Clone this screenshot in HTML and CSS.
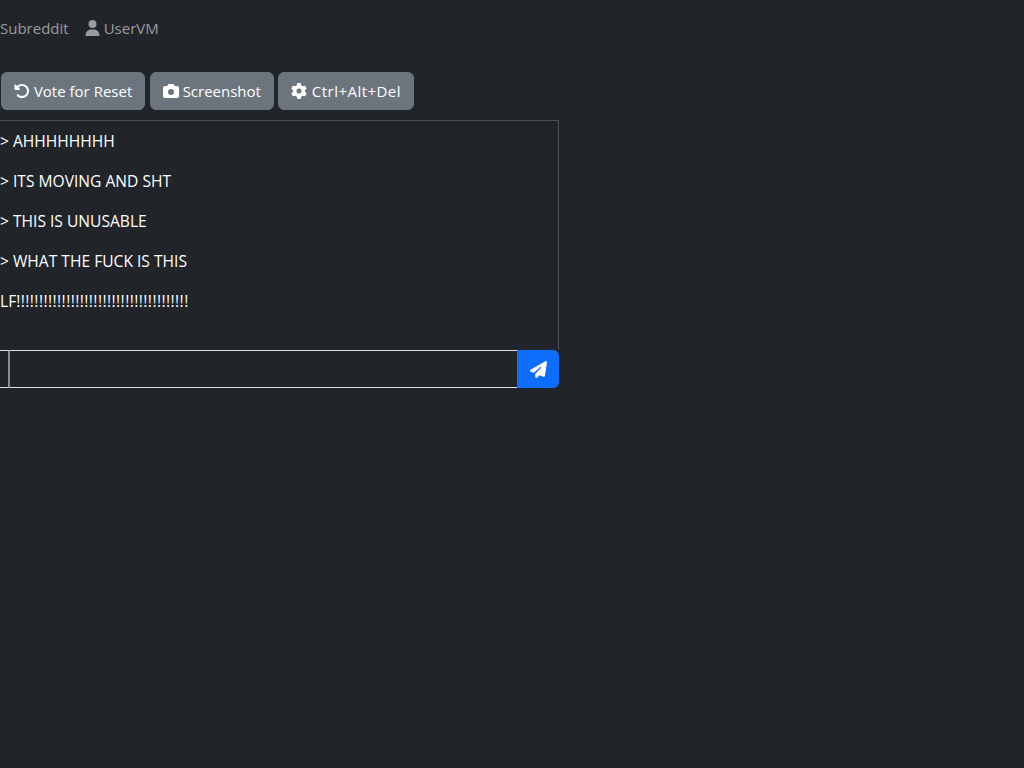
FILE: index.html
```html
<!DOCTYPE html>
<html lang="en">
<head>
<meta charset="utf-8">
<title>UserVM</title>
<link rel="stylesheet" href="styles.css">
</head>
<body>
<nav class="topnav">
  <a class="navlink" href="#">Subreddit</a>
  <a class="navlink" href="#"><svg class="icon user" viewBox="0 0 448 512"><path d="M224 256A128 128 0 1 0 224 0a128 128 0 1 0 0 256zm-45.7 48C79.8 304 0 383.8 0 482.3C0 498.7 13.3 512 29.7 512H418.3c16.4 0 29.7-13.3 29.7-29.7C448 383.8 368.2 304 269.7 304H178.3z"/></svg>UserVM</a>
</nav>
<div class="actions">
  <button class="btn"><svg class="icon" viewBox="0 0 512 512"><path d="M48.5 224H40c-13.3 0-24-10.7-24-24V72c0-9.7 5.8-18.5 14.8-22.2s19.3-1.7 26.2 5.2L98.6 96.6c87.6-86.5 228.7-86.2 315.8 1c87.5 87.5 87.5 229.3 0 316.8s-229.3 87.5-316.8 0c-12.5-12.5-12.5-32.8 0-45.3s32.8-12.5 45.3 0c62.5 62.5 163.8 62.5 226.3 0s62.5-163.8 0-226.3c-62.2-62.2-162.7-62.5-225.3-1L185 183c6.9 6.9 8.9 17.2 5.2 26.2s-12.5 14.8-22.2 14.8H48.5z"/></svg> Vote for Reset</button>
  <button class="btn"><svg class="icon" viewBox="0 0 512 512"><path d="M149.1 64.8L138.7 96H64C28.7 96 0 124.7 0 160V416c0 35.3 28.7 64 64 64H448c35.3 0 64-28.7 64-64V160c0-35.3-28.7-64-64-64H373.3L362.9 64.8C356.4 45.2 338.1 32 317.4 32H194.6c-20.7 0-39 13.2-45.5 32.8zM256 192a96 96 0 1 1 0 192 96 96 0 1 1 0-192z"/></svg> Screenshot</button>
  <button class="btn btn-keys"><svg class="icon" viewBox="0 0 512 512"><path d="M495.9 166.6c3.2 8.7 .5 18.4-6.4 24.6l-43.3 39.4c1.1 8.3 1.7 16.8 1.7 25.4s-.6 17.1-1.7 25.4l43.3 39.4c6.9 6.2 9.6 15.9 6.4 24.6c-4.4 11.9-9.7 23.3-15.8 34.3l-4.7 8.1c-6.6 11-14 21.4-22.1 31.2c-5.9 7.2-15.7 9.6-24.5 6.8l-55.7-17.7c-13.4 10.3-28.2 18.9-44 25.4l-12.5 57.1c-2 9.1-9 16.3-18.2 17.8c-13.8 2.3-28 3.5-42.5 3.5s-28.7-1.2-42.5-3.5c-9.2-1.5-16.2-8.7-18.2-17.8l-12.5-57.1c-15.8-6.5-30.6-15.1-44-25.4L83.1 425.9c-8.8 2.8-18.6 .3-24.5-6.8c-8.1-9.8-15.5-20.2-22.1-31.2l-4.7-8.1c-6.1-11-11.4-22.4-15.8-34.3c-3.2-8.7-.5-18.4 6.4-24.6l43.3-39.4C64.6 273.1 64 264.6 64 256s.6-17.1 1.7-25.4L22.4 191.2c-6.9-6.2-9.6-15.9-6.4-24.6c4.4-11.9 9.7-23.3 15.8-34.3l4.7-8.1c6.6-11 14-21.4 22.1-31.2c5.9-7.2 15.7-9.6 24.5-6.8l55.7 17.7c13.4-10.3 28.2-18.9 44-25.4l12.5-57.1c2-9.1 9-16.3 18.2-17.8C227.3 1.2 241.5 0 256 0s28.7 1.2 42.5 3.5c9.2 1.5 16.2 8.7 18.2 17.8l12.5 57.1c15.8 6.5 30.6 15.1 44 25.4l55.7-17.7c8.8-2.8 18.6-.3 24.5 6.8c8.1 9.8 15.5 20.2 22.1 31.2l4.7 8.1c6.1 11 11.4 22.4 15.8 34.3zM256 336a80 80 0 1 0 0-160 80 80 0 1 0 0 160z"/></svg> Ctrl+Alt+Del</button>
</div>
<div class="chat">
  <p class="line">&gt; AHHHHHHHH</p>
  <p class="line">&gt; ITS MOVING AND SHT</p>
  <p class="line">&gt; THIS IS UNUSABLE</p>
  <p class="line">&gt; WHAT THE FUCK IS THIS</p>
  <p class="line">LF<span class="bangs">!!!!!!!!!!!!!!!!!!!!!!!!!!!!!!!!!!!!!!</span></p>
</div>
<form class="composer">
  <span class="prefix"></span>
  <input class="field" type="text" aria-label="Message">
  <button class="send" type="button" aria-label="Send"><svg class="icon plane" viewBox="0 0 512 512"><path d="M498.1 5.6c10.1 7 15.4 19.1 13.5 31.2l-64 416c-1.5 9.7-7.4 18.2-16 23s-18.9 5.4-28 1.6L284 427.7l-68.5 74.1c-8.9 9.7-22.9 12.9-35.2 8.1S160 493.2 160 480V396.4c0-4 1.5-7.8 4.2-10.7L331.8 202.8c5.8-6.3 5.6-16-.4-22s-15.7-6.4-22-.7L106 360.8 17.7 316.6C7.1 311.3 .3 300.7 0 288.9s5.9-22.8 16.1-28.7l448-256c10.7-6.1 23.9-5.5 34 1.4z"/></svg></button>
</form>
</body>
</html>
```
FILE: styles.css
```css
* { box-sizing: border-box; }
html, body { height: 100%; }
body {
  margin: 0;
  background: #212529;
  color: #fff;
  font-family: "Open Sans", "Liberation Sans", sans-serif;
  font-size: 15px;
  line-height: 24px;
  overflow: hidden;
}
.topnav {
  display: flex;
  gap: 16px;
  height: 72px;
  padding-top: 16px;
}
.navlink {
  display: flex;
  align-items: center;
  height: 24px;
  color: rgba(255, 255, 255, 0.55);
  text-decoration: none;
  white-space: nowrap;
}
.icon {
  display: inline-block;
  width: 16px;
  height: 16px;
  fill: currentColor;
  vertical-align: -2px;
}
.icon.user { width: 15px; margin-right: 4px; }
.actions {
  display: flex;
  gap: 4.5px;
  height: 38px;
  margin-bottom: 10px;
  padding-left: 1px;
}
.btn {
  height: 38px;
  padding: 6px 12px;
  border: 1px solid #6c757d;
  border-radius: 6px;
  background: #6c757d;
  color: #fff;
  font: inherit;
  white-space: nowrap;
}
.btn-keys { letter-spacing: 0.47px; }
.chat {
  width: 559px;
  height: 230px;
  padding-top: 8px;
  border: 1px solid #495057;
  border-left: 0;
  border-bottom: 0;
  overflow: hidden;
  font-size: 15.6px;
}
.line { margin: 0 0 16px; white-space: nowrap; }
.bangs { letter-spacing: 0.42px; }
.composer {
  display: flex;
  width: 559px;
  height: 38px;
}
.prefix {
  width: 10px;
  border-top: 1px solid #dee2e6;
  border-bottom: 1px solid #dee2e6;
  border-right: 2px solid #8b8f93;
}
.field {
  flex: 1;
  min-width: 0;
  border: 1px solid #dee2e6;
  border-width: 1px 0;
  background: #212529;
  color: #fff;
  font: inherit;
  outline: 0;
}
.send {
  display: flex;
  align-items: center;
  justify-content: center;
  width: 42px;
  padding: 0;
  border: 0;
  border-radius: 0 6px 6px 0;
  background: #0d6efd;
  color: #fff;
}
.plane { width: 17px; height: 17px; }
```
